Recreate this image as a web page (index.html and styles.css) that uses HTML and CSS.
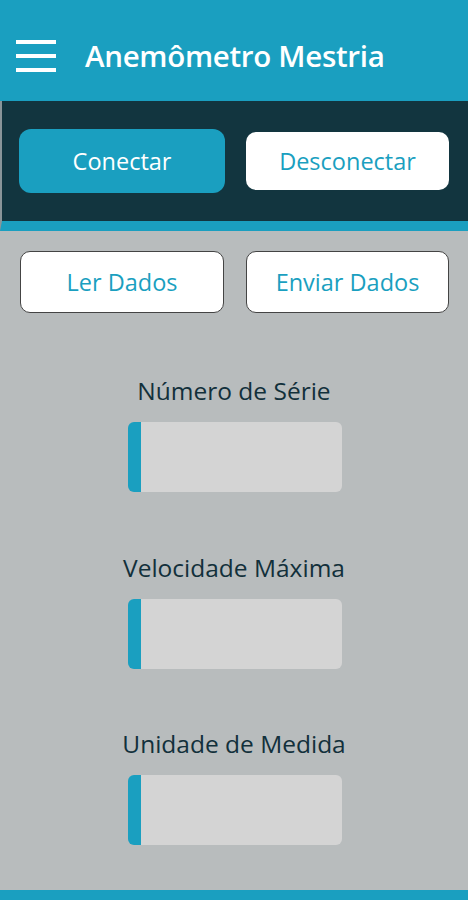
FILE: index.html
```html
<!DOCTYPE html>
<html lang="pt">
<head>
  <meta charset="UTF-8" />
  <title>Anemômetro Mestria</title>
  <link rel="stylesheet" href="styles.css">
</head>
<body>

  <header class="topbar">
    <div class="menu">
      <span></span><span></span><span></span>
    </div>
    <h1>Anemômetro Mestria</h1>
  </header>

  <section class="conn">
    <button class="btn-fill">Conectar</button>
    <button class="btn-white">Desconectar</button>
  </section>

  <main class="content">
    <div class="actions">
      <button class="btn-line">Ler Dados</button>
      <button class="btn-line">Enviar Dados</button>
    </div>

    <div class="field">
      <label>Número de Série</label>
      <div class="box"></div>
    </div>
    <div class="field">
      <label>Velocidade Máxima</label>
      <div class="box"></div>
    </div>
    <div class="field">
      <label>Unidade de Medida</label>
      <div class="box"></div>
    </div>
  </main>

  <footer class="bottom"></footer>

</body>
</html>
```

FILE: styles.css
```css
body{
  margin:0;
  font-family:"Open Sans",sans-serif;
  background:#b8bcbd;
  height:900px;
  display:flex;
  flex-direction:column;
  overflow:hidden
}
.topbar{
  height:101px;
  background:#1a9fc0;
  display:flex;
  align-items:center;
  padding:10px 0 0 16px;
  box-sizing:border-box
}
.menu{
  width:40px;
  display:flex;
  flex-direction:column;
  gap:10px
}
.menu span{
  display:block;
  height:4px;
  background:#fff
}
.topbar h1{
  margin:0 0 0 29px;
  color:#fff;
  font-size:29.5px;
  font-weight:600;
  letter-spacing:-0.3px
}
.conn{
  height:120px;
  background:#12353f;
  border-left:2px solid #8a9599;
  border-bottom:10px solid #1a9fc0;
  display:grid;
  grid-template-columns:206px 203px;
  gap:21px;
  align-items:center;
  padding-left:17px
}
button{
  font-family:"Open Sans",sans-serif;
  font-size:23.5px;
  cursor:pointer
}
.btn-fill{
  height:64px;
  background:#1a9fc0;
  color:#fff;
  border:none;
  border-radius:12px
}
.btn-white{
  height:58px;
  background:#fff;
  color:#1a9fc0;
  border:none;
  border-radius:10px
}
.content{
  flex:1;
  padding-top:20px
}
.actions{
  display:grid;
  grid-template-columns:204px 203px;
  gap:22px;
  padding-left:20px
}
.btn-line{
  height:62px;
  background:#fff;
  color:#1a9fc0;
  border:1px solid #444;
  border-radius:10px
}
.field{
  display:flex;
  flex-direction:column;
  align-items:center;
  margin-top:63px
}
.field + .field{margin-top:60.5px}
.field label{
  font-size:24.5px;
  color:#12303b;
  line-height:30px;
  margin-bottom:16px
}
.box{
  width:201px;
  height:70px;
  background:#d4d4d4;
  border-left:13px solid #1a9fc0;
  border-radius:6px;
  margin-left:2px
}
.bottom{
  height:10px;
  background:#1a9fc0
}
```
